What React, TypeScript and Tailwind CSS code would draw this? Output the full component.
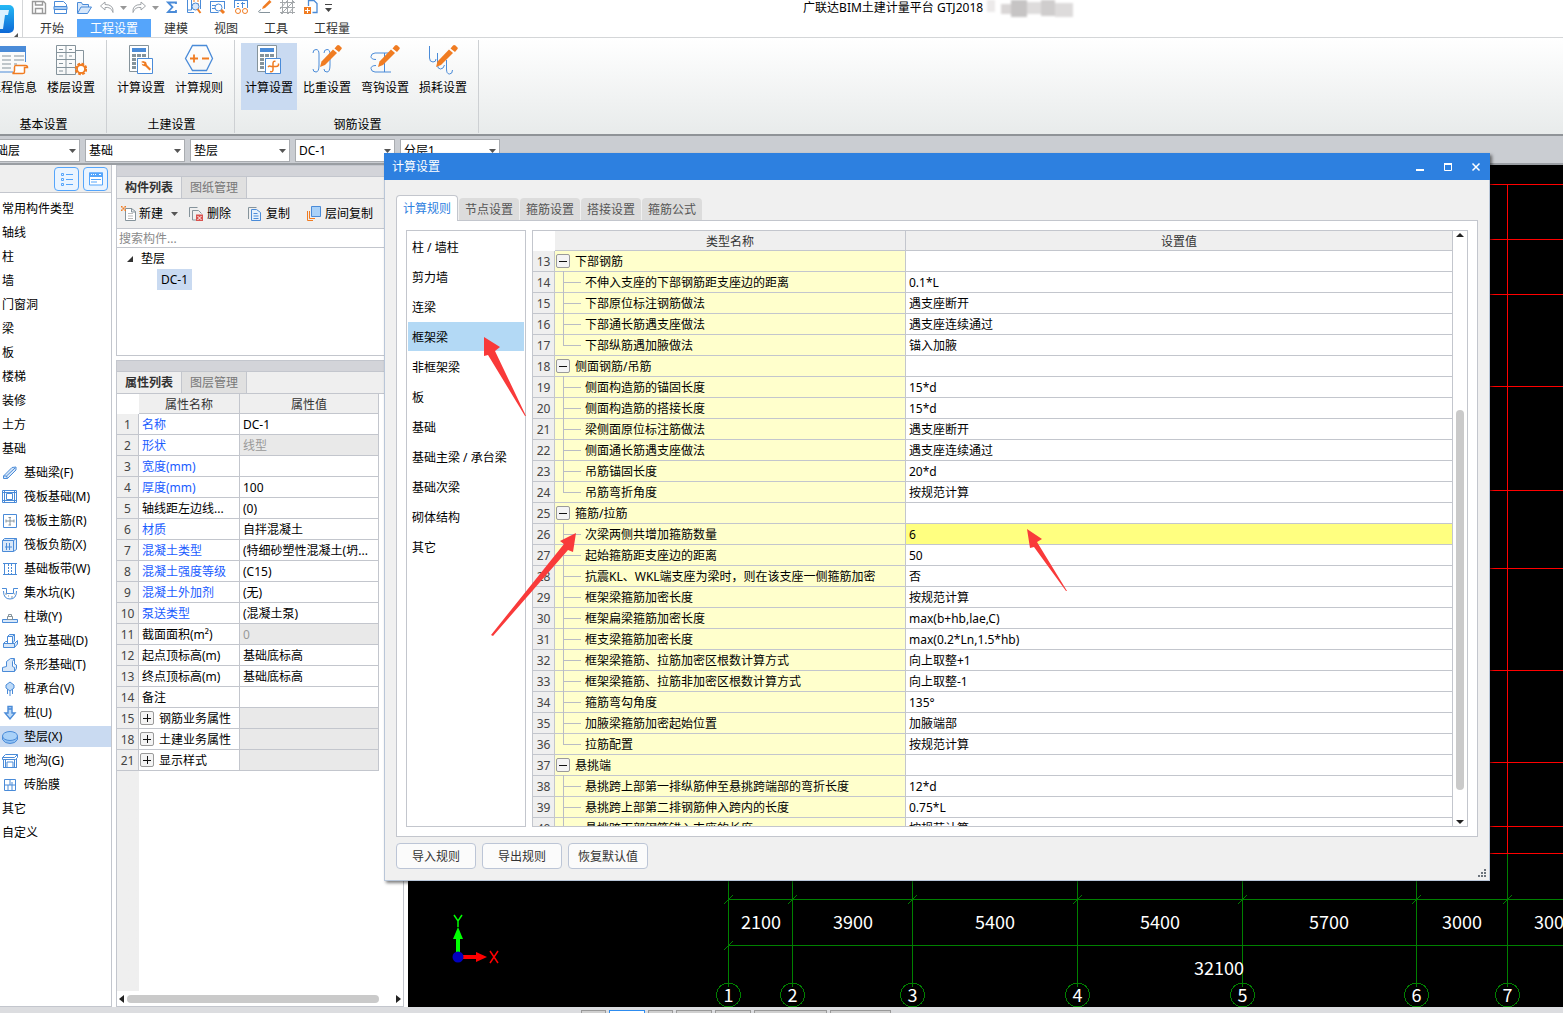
import type { ReactNode } from 'react';
import clsx from 'clsx';

const B = '#4a8bd8';
const O = '#f07c22';
const G = '#85939b';

/* ---------- icons ---------- */

function Icon({ size = 16, children }: { size?: number; children: ReactNode }) {
  return (
    <svg width={size} height={size} viewBox={`0 0 ${size} ${size}`} fill="none" className="shrink-0">
      {children}
    </svg>
  );
}

function Calculator() {
  return (
    <>
      <path d="M4.500 1.500h19v26h-19z" fill="#fff" stroke={G} />
      <path d="M7 4h14v4H7z" fill={B} />
      <path d="M7 10h4v3H7zm5 0h4v3h-4zm5 0h4v3h-4zM7 14h4v3H7zm5 0h4v3h-4zM7 18h4v3H7zM7 22h4v3H7z" fill={G} />
      <path d="M12.500 14.500h15v15h-15z" fill="#fff" stroke={B} />
    </>
  );
}

function Pencil() {
  return (
    <g fill={O}>
      <path d="m9 23 1.500-5.500L22 5.500l4 3.500-12 12z" />
      <path d="m23.500 4.500 2.500-3q1-1 2.500 0l1.500 1.500q1.500 1 .5 2L28 8z" />
    </g>
  );
}

const ribbonIcons: Record<string, ReactNode> = {
  info: (
    <>
      <path d="M1 2h28v6H1z" fill={B} />
      <path d="M1.500 8v20H16M28.500 8v10" stroke={B} />
      <path d="M5 12h9m3 0h10M5 16h9m3 0h10M5 20h9m3 0h3M5 24h9" stroke={G} />
      <path d="M18.500 21.500h10q2 0 2 2h-3v5q0 1-2 1h-10q2-1 2-3v-3q0-2 1-2z" fill="#fff" stroke={O} strokeWidth="1.500" />
    </>
  ),
  floor: (
    <>
      <path d="M1.500 1.500h19v29h-19zM20.500 6.500h8v14M1 8.500h19M1 15.500h19M1 23.500h19M11 1v30M4 5.500h4m6 0h3M4 12h4m6 0h3M4 19.500h4m6 0h3M4 27h4" stroke={G} />
      <circle cx="26" cy="25" r="5" stroke={O} strokeWidth="2.500" strokeDasharray="2.600 1.300" fill="#fff" />
      <circle cx="26" cy="25" r="4" stroke={O} strokeWidth="1.800" fill="#fff" />
    </>
  ),
  calcWrench: (
    <>
      <Calculator />
      <path d="m16 18 2-1 3 1 1 3 4 4-1.500 1.500-4-4-3-1-1-2 2 1 1-1z" fill={O} />
    </>
  ),
  hexagon: (
    <>
      <path d="M9.500 1.500h14l6 13-6 12h-14l-7-12z" stroke={B} strokeWidth="1.300" />
      <path d="M5 29.500h24" stroke={B} />
      <path d="M7 14.500h8M11 10.500v8M19 14.500h7" stroke={O} strokeWidth="1.800" />
    </>
  ),
  calcCross: (
    <>
      <Calculator />
      <path d="M22.500 17.500q-2.500-1-2.500 2v6q0 3-3 2M15 23q1.500-1.500 3-.500h5q3 0 2.500-3" stroke={O} strokeWidth="1.500" />
    </>
  ),
  weight: (
    <>
      <path d="M2 9q0-3.500 3-3.500 3 0 3 4.500v11q0 7-3 7-3 0-3-3M13 9q0-3.500 3-3.500 3 0 3 4.500v11q0 7-3 7-3 0-3-3" stroke={B} />
      <Pencil />
    </>
  ),
  hook: (
    <>
      <path d="M7 15.500q-5 0-5-3t4-3.500h16M7 21.500q-5 0-5 3t4 3.500h16M15.500 9v19" stroke={B} />
      <Pencil />
    </>
  ),
  loss: (
    <>
      <path d="M2.500 2v12q0 4 3.500 4 3 0 3-3M10.500 9v12q0 4 3 4 3 0 4-4M19.500 16v9q0 5 3 5 3 0 3-4" stroke={B} />
      <Pencil />
    </>
  ),
};

const quickIcons: { w: string; icon: ReactNode; label: string }[] = [
  { label: '保存', w: 'w-[22px]', icon: <path d="M1.500 1.500h11l2 2v10h-13zM4.500 1v4h7V1M4.500 14V8.500h7V14" stroke="#9a9a9a" strokeWidth="1.400" /> },
  {
    label: '新建工程', w: 'w-[23px]',
    icon: <><path d="M1.500 6V1.500h9l3 3V6M1.500 9v4.500h12V9" stroke={B} /><path d="M1 6.500h13v3H1z" fill="#a9cdf5" stroke={B} /></>,
  },
  { label: '打开', w: 'w-[23px]', icon: <path d="M1.500 13V2.500h4l1 2h6V7M1.500 13.500 5 7h10.500l-4 6.500z" fill="#d8e8fb" stroke={B} /> },
  { label: '撤销', w: 'w-[32px]', icon: <path d="M6 2 1.500 6 6 10V7.500q6-1 8 5 1-8-8-8z" stroke="#a0a4a8" /> },
  { label: '恢复', w: 'w-[33px]', icon: <path d="m10 2 4.500 4-4.500 4V7.500q-6-1-8 5-1-8 8-8z" stroke="#a0a4a8" /> },
  { label: '汇总计算', w: 'w-[22px]', icon: <path d="M12 4V2.500H4L8.500 7 4 12h8v-2" stroke={B} strokeWidth="1.800" /> },
  {
    label: '查找', w: 'w-[23px]',
    icon: <><path d="M1.500 0v12.500H8M5.500 0v10H1M14.500 0v9" stroke={B} /><path d="M7 1h2m2 0h2M7 4h2m2 0h2" stroke={O} /><circle cx="9.500" cy="6.500" r="3.500" fill="#dbe9fa" stroke={B} /><path d="m11.500 9 3 4" stroke={O} strokeWidth="2" /></>,
  },
  {
    label: '查看', w: 'w-[24px]',
    icon: <><path d="M1.500 1v11.500h8M15.500 1v8M1 1.500h15M3 5.500h4M3 8.500h3" stroke={B} /><circle cx="9.500" cy="7.500" r="3.500" stroke={B} fill="#fff" /><path d="m12 10 3 3" stroke={O} strokeWidth="3" /></>,
  },
  {
    label: '检查', w: 'w-[24px]',
    icon: <><path d="M1.500 8V0M14.500 8V0M1 .5h14M4 3.500h2m2 0h4M4 6.500h2M9.500 2v6" stroke={B} /><circle cx="5" cy="11" r="2.500" stroke={O} /><circle cx="12" cy="11" r="2.500" stroke={O} /></>,
  },
  { label: '编辑', w: 'w-[22px]', icon: <><path d="m5 9 1-2.500L12.500 0l2 2L8 8z" fill={O} /><path d="M4 9.500q-5 3 0 3h9" stroke={G} /></> },
  { label: '网格', w: 'w-[24px]', icon: <path d="M1 2.500h15M1 7.500h15M1 12.500h15M3.500 0v14M8.500 0v14M13.500 0v14M1 9 8 1M2 14 15 1M9 14l6-7" stroke="#a4a8ab" /> },
  {
    label: '添加', w: 'w-[22px]',
    icon: <><path d="M5.500 6V0M5 .5h6l3 3v9H9.500" stroke={B} strokeWidth="1.300" /><path d="M1 7h7v7H1z" fill={O} /><path d="M2 10.500h5M4.500 8v5" stroke="#fff" /></>,
  },
];

const typeIcons: Record<string, ReactNode> = {
  F: <path d="M1.500 11 10 2.500l4-.5v3L5.500 13.500h-4zM1.500 11h3l1 2.500M4.500 11 13 3" fill="#d9e8f9" stroke={B} />,
  M: <><path d="M.5 1.500h14v12H.5z" stroke={B} /><path d="M4.500 4.500h6v6h-6zM2.500 1v13M12.500 1v13M0 3.500h15M0 11.500h15" stroke={B} /></>,
  R: <><path d="M1.500 1.500h13v13h-13z" stroke={B} /><path d="M8 4v8M4 8h8M4 6.500v3M12 6.500v3M6.500 4.500H9M6.500 12H9" stroke={G} /></>,
  X: <><path d="M.5 3.500h11v11H.5zM.5 3.500l2-2h12v11l-3 2M11.500 3.500l3-2" fill="#d9e8f9" stroke={B} /><path d="M3 10h7M4.500 6v7M7.500 6v7" stroke={B} /></>,
  W: <><path d="M1 2.500h14M1 13.500h14M2.500 3v10M13.500 3v10" stroke={B} /><path d="M6.500 3v10M9.500 3v10" stroke={B} strokeDasharray="2 1" /></>,
  K: <><path d="M0 3.500h4.500v5h7v-5H16M1.500 6q0 8 6.500 8t6.500-8" stroke={B} /><path d="M3 9h2m1 2h1m2 1h2m1-3h1" stroke={G} /></>,
  Y: <><path d="M.5 10.500h15v3H.5z" fill="#d9e8f9" stroke={B} /><path d="M6.500 5.500h3v2h-3zM5.500 7.500h5v3h-5z" stroke={G} /></>,
  D: <path d="M1.500 10.500h11v4h-11zM1.500 10.500l2-2H5m7.500 2 3-3v3.500l-3 3.500M5.500 10V3.500l2-2h5l-2 2h-5m5 0V10l2-2V1.500" fill="#d9e8f9" stroke={B} />,
  T: <path d="M.5 14.500v-4l4-1v-5l4-3h4l-2 3v5l2 1v4zM12.500 14.500l2-3V8l-2-1V2" fill="#d9e8f9" stroke={B} />,
  V: <><path d="m8 1 4 3v3l-4 3-4-3V4z" fill="#bddaf8" stroke={B} /><path d="M8 10v5M5.500 8v5M10.500 8v5" stroke={B} /></>,
  U: <path d="M6 1.500h4V8h3l-5 6-5-6h3zM6.500 4h3" fill="#bddaf8" stroke={B} strokeWidth="1.400" />,
  P: <><path d="M.5 7v3.500q2 4 7.500 4t7.500-4V7" fill="#8fc0f3" stroke={B} /><ellipse cx="8" cy="7" rx="7.500" ry="4.500" fill="#a9d1f8" stroke={B} /></>,
  C: <path d="M.5 4.500h12l3-3h-12zM.5 4.500v2h13l2-2v-3M3.500 7v7.500h-2v-8M12.500 7v7.500M14.500 6v8.500M5 14.500V9h6v5.500M1 14.500h14" stroke={B} />,
  Z: <path d="M2.500 2.500h11v11h-11zM2.500 8h11M8 2.500V8M6 8v5.500M10 5v8" stroke={B} />,
};

const toolIcons: Record<string, ReactNode> = {
  add: <><path d="M4.500 2.500h6l4 3v9h-10zM10.500 2v4h4" fill="#fff" stroke={G} /><path d="M7 7.500h5m-5 2.500h5m-5 2.500h5" stroke="#bbb" /><path d="M0 0h1.500v1.500H0zM3.500 0H5v1.500H3.500zM1.500 1.500h2v2h-2zM0 3.500h1.500V5H0zM3.500 3.500H5V5H3.500z" fill={O} /></>,
  remove: <><path d="M.5 11V1.500h8M3.500 14V4.500h6l3 3M3.500 14H7" stroke={G} /><path d="M7 8.500h7v6.500H7z" fill="#d9534f" /><path d="m8.500 10 4 4m0-4-4 4" stroke="#fff" /></>,
  copy: <><path d="M.5 13V1.500h8" stroke={G} /><path d="M3.500 3.500h5l4 3v8h-9z" fill="#e4f0fc" stroke={B} /><path d="M5.500 7.500h4m-4 2.500h5m-5 2.500h5" stroke={B} /></>,
  layers: <><path d="M.5 5v9.500H6M2.500 5v7.500H8" stroke={O} /><path d="M4.500.5h9v10h-9z" fill="#a9d1f8" stroke={B} /></>,
};

/* ---------- data ---------- */

const menuTabs = ['开始', '工程设置', '建模', '视图', '工具', '工程量'];

const ribbonGroups = [
  { title: '基本设置', items: [['工程信息', 'info'], ['楼层设置', 'floor']] },
  { title: '土建设置', items: [['计算设置', 'calcWrench'], ['计算规则', 'hexagon']] },
  { title: '钢筋设置', items: [['计算设置', 'calcCross'], ['比重设置', 'weight'], ['弯钩设置', 'hook'], ['损耗设置', 'loss']] },
];

const combos = [['楼层', '基础层'], ['构件类型', '基础'], ['构件', '垫层'], ['名称', 'DC-1'], ['分层', '分层1']];

const types: [string, string?][] = [
  ['常用构件类型'], ['轴线'], ['柱'], ['墙'], ['门窗洞'], ['梁'], ['板'], ['楼梯'], ['装修'], ['土方'], ['基础'],
  ['基础梁(F)', 'F'], ['筏板基础(M)', 'M'], ['筏板主筋(R)', 'R'], ['筏板负筋(X)', 'X'], ['基础板带(W)', 'W'],
  ['集水坑(K)', 'K'], ['柱墩(Y)', 'Y'], ['独立基础(D)', 'D'], ['条形基础(T)', 'T'], ['桩承台(V)', 'V'], ['桩(U)', 'U'],
  ['垫层(X)', 'P'], ['地沟(G)', 'C'], ['砖胎膜', 'Z'], ['其它'], ['自定义'],
];

type Prop = { n: number; name: string; value?: string; blue?: boolean; off?: boolean; group?: boolean };

const props: Prop[] = [
  { n: 1, name: '名称', value: 'DC-1', blue: true },
  { n: 2, name: '形状', value: '线型', blue: true, off: true },
  { n: 3, name: '宽度(mm)', blue: true },
  { n: 4, name: '厚度(mm)', value: '100', blue: true },
  { n: 5, name: '轴线距左边线...', value: '(0)' },
  { n: 6, name: '材质', value: '自拌混凝土', blue: true },
  { n: 7, name: '混凝土类型', value: '(特细砂塑性混凝土(坍...', blue: true },
  { n: 8, name: '混凝土强度等级', value: '(C15)', blue: true },
  { n: 9, name: '混凝土外加剂', value: '(无)', blue: true },
  { n: 10, name: '泵送类型', value: '(混凝土泵)', blue: true },
  { n: 11, name: '截面面积(m²)', value: '0', off: true },
  { n: 12, name: '起点顶标高(m)', value: '基础底标高' },
  { n: 13, name: '终点顶标高(m)', value: '基础底标高' },
  { n: 14, name: '备注' },
  { n: 15, name: '钢筋业务属性', off: true, group: true },
  { n: 18, name: '土建业务属性', off: true, group: true },
  { n: 21, name: '显示样式', off: true, group: true },
];

const dialogTabs = ['计算规则', '节点设置', '箍筋设置', '搭接设置', '箍筋公式'];
const categories = ['柱 / 墙柱', '剪力墙', '连梁', '框架梁', '非框架梁', '板', '基础', '基础主梁 / 承台梁', '基础次梁', '砌体结构', '其它'];

// [name, value]; rows without a value are group headers
const rules: [string, string?][] = [
  ['下部钢筋'],
  ['不伸入支座的下部钢筋距支座边的距离', '0.1*L'],
  ['下部原位标注钢筋做法', '遇支座断开'],
  ['下部通长筋遇支座做法', '遇支座连续通过'],
  ['下部纵筋遇加腋做法', '锚入加腋'],
  ['侧面钢筋/吊筋'],
  ['侧面构造筋的锚固长度', '15*d'],
  ['侧面构造筋的搭接长度', '15*d'],
  ['梁侧面原位标注筋做法', '遇支座断开'],
  ['侧面通长筋遇支座做法', '遇支座连续通过'],
  ['吊筋锚固长度', '20*d'],
  ['吊筋弯折角度', '按规范计算'],
  ['箍筋/拉筋'],
  ['次梁两侧共增加箍筋数量', '6'],
  ['起始箍筋距支座边的距离', '50'],
  ['抗震KL、WKL端支座为梁时，则在该支座一侧箍筋加密', '否'],
  ['框架梁箍筋加密长度', '按规范计算'],
  ['框架扁梁箍筋加密长度', 'max(b+hb,lae,C)'],
  ['框支梁箍筋加密长度', 'max(0.2*Ln,1.5*hb)'],
  ['框架梁箍筋、拉筋加密区根数计算方式', '向上取整+1'],
  ['框架梁箍筋、拉筋非加密区根数计算方式', '向上取整-1'],
  ['箍筋弯勾角度', '135°'],
  ['加腋梁箍筋加密起始位置', '加腋端部'],
  ['拉筋配置', '按规范计算'],
  ['悬挑端'],
  ['悬挑跨上部第一排纵筋伸至悬挑跨端部的弯折长度', '12*d'],
  ['悬挑跨上部第二排钢筋伸入跨内的长度', '0.75*L'],
  ['悬挑跨下部钢筋锚入支座的长度', '按规范计算'],
];

const axes = [728, 792, 912, 1077, 1242, 1416, 1507];
const spans: [number, string][] = [[761, '2100'], [853, '3900'], [995, '5400'], [1160, '5400'], [1329, '5700'], [1462, '3000'], [1554, '3000']];
const redRows = [184, 239, 294, 386, 490, 568, 670, 762, 826, 853];

/* ---------- pieces ---------- */

function Toggle({ open }: { open: boolean }) {
  return (
    <button aria-label={open ? '折叠' : '展开'} className="flex size-3.5 shrink-0 items-center justify-center rounded-xs border border-[#9a9a9a] bg-[#f4f4f4]">
      <svg width="8" height="8" stroke="#111" shapeRendering="crispEdges">
        <path d={open ? 'M0 4.500h8' : 'M0 4.500h8M4.500 0v8'} />
      </svg>
    </button>
  );
}

function Caret({ className }: { className?: string }) {
  return (
    <svg width="7" height="4" className={clsx('shrink-0', className)}>
      <path d="M0 0h7L3.500 4z" fill="#555" />
    </svg>
  );
}

function PanelTabs({ tabs }: { tabs: string[] }) {
  return (
    <>
      <div className="h-2.5 shrink-0 bg-[#d3d4d9]" />
      <div className="flex h-[23px] shrink-0 border-y border-[#c3c6cd] bg-[#efefef]">
        {tabs.map((t, i) => (
          <button key={t} className={clsx('w-[65px] border-r border-[#c3c6cd]', i === 0 ? 'font-bold text-[#333]' : 'bg-[#e0e0e0] text-[#777]')}>
            {t}
          </button>
        ))}
      </div>
    </>
  );
}

function Header() {
  return (
    <header className="relative flex h-[38px] shrink-0 border-b border-[#d4d6d8] bg-white">
      <div className="relative flex w-[23px] shrink-0 items-center border-r border-[#d4d6d8]">
        <svg width="20" height="38">
          <defs>
            <linearGradient id="logo" x1="0" y1="0" x2="0" y2="1">
              <stop offset="0" stopColor="#25b9f5" />
              <stop offset="1" stopColor="#0c68d6" />
            </linearGradient>
          </defs>
          <rect x="-14" y="5" width="28" height="28" rx="5" fill="url(#logo)" />
          <path d="M0 10h9l-1 5H5L3 29H0z" fill="#d9f2ff" />
          <path d="M18 33v4h-4z" fill="#555" />
        </svg>
      </div>
      <div className="flex flex-col justify-between">
        <div className="flex h-[15px] items-center pl-2">
          {quickIcons.map((q, i) => (
            <button key={q.label} aria-label={q.label} className={clsx('flex shrink-0 items-center', q.w)}>
              <svg width="17" height="15" fill="none" className="shrink-0">{q.icon}</svg>
              {(i === 3 || i === 4) && <Caret className="ml-1 opacity-60" />}
            </button>
          ))}
          <svg width="7" height="8" className="shrink-0"><path d="M0 .5h7" stroke="#444" /><path d="M0 4h7L3.500 8z" fill="#444" /></svg>
        </div>
        <nav className="flex pl-1">
          {menuTabs.map((t, i) => (
            <button key={t} className={clsx('h-[18px] px-[13px] pt-0.5', i === 1 ? 'bg-[#55a5fb] text-white' : 'text-[#333]')}>{t}</button>
          ))}
        </nav>
      </div>
      <div className="ml-[440px] flex h-4 items-center gap-1">
        <h1>广联达BIM土建计量平台 GTJ2018</h1>
        <svg width="86" height="17" className="blur-[1px]">
          <path d="M0 0h8v12H0z" fill="#eceaea" />
          <path d="M14 4h10v10H14z" fill="#d9d6d6" />
          <path d="M24 0h16v17H24z" fill="#c6c4c4" />
          <path d="M40 2h14v12H40z" fill="#dedcdc" />
          <path d="M54 0h14v16H54z" fill="#cfcdcd" />
          <path d="M68 3h18v14H68z" fill="#dddbdb" />
        </svg>
      </div>
    </header>
  );
}

function Ribbon() {
  return (
    <div className="flex h-[98px] shrink-0 border-b-2 border-[#8f9397] bg-linear-to-b from-white to-[#e8ebeb]">
      <div className="-ml-[21px] flex pt-0.5 pb-px">
        {ribbonGroups.map((g, gi) => (
          <section key={g.title} className="flex flex-col justify-between border-r border-[#cdd0d3] pt-[3px] pr-[7px] pl-1.5">
            <div className="flex gap-0.5">
              {g.items.map(([label, icon], i) => (
                <button key={label} className={clsx('flex h-[67px] w-14 flex-col items-center gap-1 pt-px', gi === 2 && i === 0 && 'bg-[#c9daf1]')}>
                  <Icon size={32}>{ribbonIcons[icon]}</Icon>
                  <span className="whitespace-nowrap">{label}</span>
                </button>
              ))}
            </div>
            <h2 className="pl-[3px] text-center">{g.title}</h2>
          </section>
        ))}
      </div>
    </div>
  );
}

function ComboBar() {
  return (
    <div className="flex h-[29px] shrink-0 items-center gap-[5px] border-b-2 border-[#9a9ea3] bg-[#cacdd2] pt-0.5">
      {combos.map(([label, value], i) => (
        <label key={label} className={clsx('relative flex w-[100px] items-center', i === 0 && '-ml-5')}>
          <select aria-label={label} className="h-[23px] w-full appearance-none border border-[#a9acb0] bg-white pl-[3px] outline-none">
            <option>{value}</option>
          </select>
          <Caret className="pointer-events-none absolute right-1" />
        </label>
      ))}
    </div>
  );
}

function Sidebar() {
  return (
    <aside className="w-28 shrink-0 border-r border-b border-[#c3c6cd] bg-white">
      <div className="flex h-7 items-center justify-end gap-1 border-b border-[#c3c6cd] bg-[#efefef] pr-[3px]">
        <button aria-label="列表" className="flex h-6 w-[25px] items-center justify-center rounded-sm border border-[#55a5fb] bg-[#eaf4ff]">
          <Icon size={16}><path d="M2.500 2.500h2v2h-2zM2.500 7.500h2v2h-2zM2.500 12.500h2v2h-2zM7 3.500h7M7 8.500h7M7 13.500h7" stroke="#55a5fb" /></Icon>
        </button>
        <button aria-label="面板" className="flex h-6 w-[25px] items-center justify-center rounded-sm border border-[#55a5fb] bg-[#eaf4ff]">
          <Icon size={16}>
            <path d="M1.500 2h13v12h-13z" fill="#fff" stroke="#55a5fb" />
            <path d="M1 1.500h14V6H1z" fill="#55a5fb" />
            <path d="M3 3.500h1m1 0h1m1 0h1m3 0h2" stroke="#fff" /><path d="M3 8.500h10M3 11h6" stroke="#55a5fb" />
          </Icon>
        </button>
      </div>
      <ul className="pt-[5px]">
        {types.map(([label, icon]) => (
          <li key={label} className="h-6">
            <button className={clsx('flex h-[21px] w-full items-center pl-0.5 text-left', label === '垫层(X)' && 'bg-[#c9daf1]')}>
              {icon && <span className="mr-1.5"><Icon>{typeIcons[icon]}</Icon></span>}
              {label}
            </button>
          </li>
        ))}
      </ul>
    </aside>
  );
}

function ComponentPanel() {
  const tools = [['新建', 'add'], ['删除', 'remove'], ['复制', 'copy'], ['层间复制', 'layers']];
  return (
    <section className="h-[191px] shrink-0 border border-[#c3c6cd] bg-white">
      <PanelTabs tabs={['构件列表', '图纸管理']} />
      <div className="flex h-[30px] items-center gap-[17px] border-b border-[#c3c6cd] bg-[#efefef] pl-1">
        {tools.map(([label, icon]) => (
          <button key={icon} className={clsx('flex items-center gap-0.5', icon === 'add' && '-mr-1.5')}>
            <Icon>{toolIcons[icon]}</Icon>
            {label}
            {icon === 'add' && <Caret className="ml-1.5" />}
          </button>
        ))}
      </div>
      <input aria-label="搜索构件" placeholder="搜索构件..." className="block h-[19px] w-full border-b border-[#c3c6cd] pl-0.5 outline-none placeholder:text-[#8a8a8a]" />
      <div className="flex h-[21px] items-center gap-2 pl-2.5">
        <svg width="6" height="6"><path d="M6 0v6H0z" fill="#333" /></svg>
        垫层
      </div>
      <button className="ml-10 block h-[21px] bg-[#c9daf1] px-1">DC-1</button>
    </section>
  );
}

function PropertyPanel() {
  return (
    <section className="flex min-h-0 grow flex-col border border-[#c3c6cd] bg-white">
      <PanelTabs tabs={['属性列表', '图层管理']} />
      <div className="flex grow flex-col bg-linear-to-r from-[#efefef] from-[22px] to-white to-[22px]">
        <table className="w-[262px] table-fixed border-separate border-spacing-0">
          <colgroup>
            <col className="w-[22px]" />
            <col className="w-[101px]" />
            <col />
          </colgroup>
          <thead>
            <tr className="bg-[#efefef]">
              <th className="h-5 bg-white" />
              <th className="border-r border-b border-[#c3c6cd] pt-0.5 font-normal text-[#333]">属性名称</th>
              <th className="border-r border-b border-[#c3c6cd] pt-0.5 font-normal text-[#333]">属性值</th>
            </tr>
          </thead>
          <tbody>
            {props.map((p) => (
              <tr key={p.n} className="bg-white">
                <td className="h-[21px] border-r border-b border-[#c3c6cd] bg-[#efefef] pt-0.5 text-center text-[#444]">{p.n}</td>
                <td className={clsx('border-r border-b border-[#c3c6cd] whitespace-nowrap', p.group ? 'pl-px' : 'pt-0.5 pl-[3px]', p.blue && 'text-[#1a5cff]')}>
                  {p.group ? <div className="flex items-center gap-[5px]"><Toggle open={false} /><span className="pt-0.5">{p.name}</span></div> : p.name}
                </td>
                <td className={clsx('border-r border-b border-[#c3c6cd] pt-0.5 pl-[3px] whitespace-nowrap', p.off && 'bg-[#e9e9e9] text-[#999]')}>{p.value}</td>
              </tr>
            ))}
          </tbody>
        </table>
      </div>
      <div className="flex h-[15px] shrink-0 items-center gap-[3px] bg-white px-0.5">
        <svg width="5" height="8"><path d="M5 0v8L0 4z" fill="#222" /></svg>
        <div className="mr-3.5 h-2 grow rounded-full bg-[#cacaca]" />
        <svg width="5" height="8"><path d="M0 0v8l5-4z" fill="#222" /></svg>
      </div>
    </section>
  );
}

function Drawing() {
  return (
    <svg viewBox="408 165 1155 842" preserveAspectRatio="xMinYMin slice" className="block h-full w-full" fill="none">
      <g stroke="#ff0000" shapeRendering="crispEdges">
        {redRows.map((y) => <path key={y} d={`M1400 ${y}.500H1563`} />)}
        <path d="M1507.500 184V853" />
      </g>
      <g stroke="#008000" shapeRendering="crispEdges">
        <path d="M728 899.500H1563M728 945.500H1563M1507.500 854V985M724 950l9-9" />
        {axes.map((x) => (
          <g key={x}>
            <path d={`M${x}.500 880V987M${x - 4} 904l9-9`} />
            <circle cx={x + 0.5} cy="995" r="12" />
          </g>
        ))}
      </g>
      <g fill="#fff" fontSize="18" textAnchor="middle" className="font-['Noto_Sans_CJK_SC',sans-serif]">
        {axes.map((x, i) => <text key={x} x={x + 0.5} y="1002">{i + 1}</text>)}
        {spans.map(([x, t]) => <text key={x} x={x} y="929">{t}</text>)}
        <text x="1219" y="975">32100</text>
      </g>
      <path d="M456 935h4v20h-4z" fill="#0f0" />
      <path d="m458 927 5 12h-10z" fill="#0f0" />
      <path d="M460 955h17v4h-17z" fill="red" />
      <path d="m487 957-11 5v-10z" fill="red" />
      <circle cx="458" cy="957" r="5.500" fill="#0000c0" />
      <path d="m454 915 4 6 4-6M458 921v6" stroke="#0f0" strokeWidth="1.500" />
      <path d="m490 951 8 12M498 951l-8 12" stroke="red" strokeWidth="1.500" />
    </svg>
  );
}

function TreeLine({ last }: { last: boolean }) {
  return (
    <svg width="30" height="20" className="shrink-0 overflow-visible" stroke="#b9bcc4" shapeRendering="crispEdges">
      <path d={last ? 'M8.500-1V10.500H26' : 'M8.500-1V21M9 10.500H26'} fill="none" />
    </svg>
  );
}

function RuleTable() {
  return (
    <div className="flex grow overflow-hidden border border-[#c3c6cd]">
      <div className="grow overflow-hidden">
        <table className="w-full table-fixed border-separate border-spacing-0">
          <colgroup>
            <col className="w-[22px]" />
            <col className="w-[351px]" />
            <col />
          </colgroup>
          <thead>
            <tr className="bg-[#efefef] text-[#333]">
              <th className="h-5 bg-white" />
              <th className="border-r border-b border-[#c3c6cd] pt-0.5 font-normal">类型名称</th>
              <th className="border-r border-b border-[#c3c6cd] pt-0.5 font-normal">设置值</th>
            </tr>
          </thead>
          <tbody>
            {rules.map(([name, value], i) => (
              <tr key={name}>
                <td className="h-[21px] border-r border-b border-[#c3c6cd] bg-[#efefef] pt-0.5 text-center text-[#444]">{i + 13}</td>
                <td className="border-r border-b border-[#c3c6cd] bg-[#ffffcc] p-0 whitespace-nowrap">
                  <div className="flex h-5 items-center">
                    {value ? <TreeLine last={i < rules.length - 1 && !rules[i + 1][1]} /> : <span className="mr-[5px] ml-px flex"><Toggle open /></span>}
                    <span className="pt-0.5">{name}</span>
                  </div>
                </td>
                <td className={clsx('border-r border-b border-[#c3c6cd] pt-0.5 pl-[3px]', i === 13 && 'bg-[#ffff80]')}>{value}</td>
              </tr>
            ))}
          </tbody>
        </table>
      </div>
      <div className="flex w-3.5 shrink-0 flex-col items-center py-0.5">
        <svg width="8" height="4"><path d="M4 0l4 4H0z" fill="#222" /></svg>
        <div className="mt-[173px] mb-[30px] w-2 grow rounded-full bg-[#cacaca]" />
        <svg width="8" height="4"><path d="M0 0h8L4 4z" fill="#222" /></svg>
      </div>
    </div>
  );
}

function SettingsDialog() {
  return (
    <div role="dialog" aria-label="计算设置" className="absolute top-[153px] left-[384px] flex h-[728px] w-[1106px] flex-col border border-t-0 border-[#b9c6d8] bg-[#f0f0f0] shadow-[2px_2px_3px_rgba(0,0,0,0.5)]">
      <div className="-mx-px flex h-[27px] shrink-0 items-center justify-between bg-[#2d80e0] px-2 text-white">
        <h2>计算设置</h2>
        <div className="flex gap-4">
          <button aria-label="最小化"><Icon size={12}><path d="M2 9h8" stroke="#fff" strokeWidth="2" /></Icon></button>
          <button aria-label="最大化"><Icon size={12}><path d="M2.500 3v6.500h7V3" stroke="#fff" /><path d="M2 3h8" stroke="#fff" strokeWidth="2" /></Icon></button>
          <button aria-label="关闭"><Icon size={12}><path d="m2.500 2.500 7 7m0-7-7 7" stroke="#fff" strokeWidth="1.500" /></Icon></button>
        </div>
      </div>
      <div className="flex grow flex-col overflow-hidden px-[11px] pt-[15px] pb-[11px]">
        <div className="z-10 -mb-px flex items-end gap-px">
          {dialogTabs.map((t, i) => (
            <button key={t} className={clsx('rounded-t-sm', i === 0 ? 'h-[26px] w-[62px] border border-b-0 border-[#c3c6cd] bg-white text-[#2d80e0]' : 'mb-px h-[22px] w-[60px] bg-[#dcdcdc] pt-0.5 text-[#555]')}>
              {t}
            </button>
          ))}
        </div>
        <div className="flex grow gap-1.5 overflow-hidden border border-[#c3c6cd] bg-white p-[9px]">
          <ul className="w-[120px] shrink-0 border border-[#c3c6cd] px-px pt-px">
            {categories.map((c) => (
              <li key={c}>
                <button className={clsx('mb-px block h-[29px] w-full pt-0.5 pl-1 text-left', c === '框架梁' && 'bg-[#b3d9f5]')}>{c}</button>
              </li>
            ))}
          </ul>
          <RuleTable />
        </div>
        <div className="mt-1.5 flex gap-1.5">
          {['导入规则', '导出规则', '恢复默认值'].map((b) => (
            <button key={b} className="h-[26px] w-20 rounded-sm border border-[#bcc5d6] bg-[#fbfbfb] pt-0.5 text-[#333]">{b}</button>
          ))}
        </div>
      </div>
      <svg width="9" height="9" className="absolute right-0.5 bottom-0.5" fill="#6d747c">
        <path d="M6 0h2v2H6zM3 3h2v2H3zM6 3h2v2H6zM0 6h2v2H0zM3 6h2v2H3zM6 6h2v2H6z" />
      </svg>
    </div>
  );
}

export default function App() {
  return (
    <div className="relative flex h-screen flex-col overflow-hidden bg-white font-['Noto_Sans','Noto_Sans_CJK_SC',sans-serif] text-xs text-black">
      <Header />
      <Ribbon />
      <ComboBar />
      <main className="flex min-h-0 grow gap-1 bg-white">
        <Sidebar />
        <div className="flex w-72 shrink-0 flex-col gap-1">
          <ComponentPanel />
          <PropertyPanel />
        </div>
        <div className="min-w-0 grow bg-black"><Drawing /></div>
      </main>
      <footer className="flex h-1.5 shrink-0 items-end gap-[3px] overflow-hidden bg-[#dcdde0] pl-[581px]">
        {['w-[25px]', 'w-9', 'w-[25px]', 'w-9', 'w-9', 'w-[73px]', 'w-[61px]'].map((w, i) => (
          <span key={i} className={clsx('h-[3px] border border-b-0', w, i === 1 ? 'border-[#2d8cf0] bg-white' : 'border-[#999] bg-[#d0d0d0]')} />
        ))}
      </footer>
      <SettingsDialog />
      <svg width="600" height="320" className="pointer-events-none absolute top-[330px] left-[480px]" fill="#f93a3a">
        <path d="m4 7 16 10-5 4 31 65h-1L8 25l-4 1z" />
        <path d="m96 203-3 19-5-2-75 86-2-1 73-91-4-3z" />
        <path d="m547 199 15 10-5 3 30 49h-1l-32-44-4 1z" />
      </svg>
    </div>
  );
}
